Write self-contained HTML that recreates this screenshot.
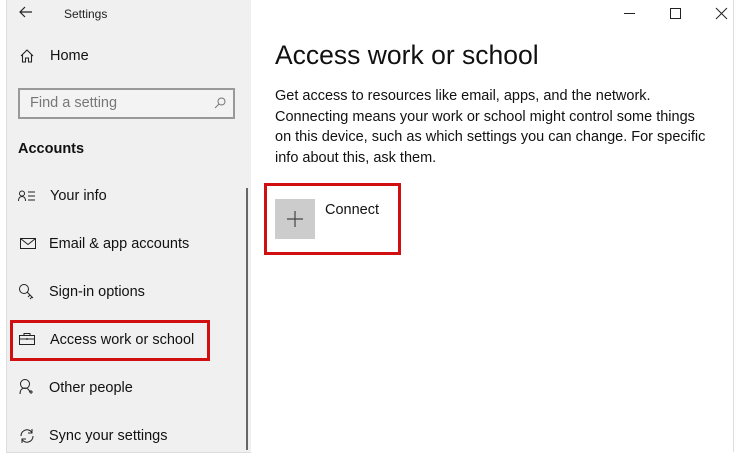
<!DOCTYPE html>
<html><head><meta charset="utf-8"><style>
body{margin:0;width:739px;height:471px;background:#fff;font-family:"Liberation Sans",sans-serif;position:relative;overflow:hidden}
.a{position:absolute}
.side{left:6px;top:0;width:244px;height:452px;background:#f0f0f0;border-bottom:1px solid #ddd;border-left:1px solid #ddd}
.t{font-size:14.5px;color:#111;white-space:nowrap}
svg{position:absolute;overflow:visible}
</style></head><body>
<div class="a side"></div>
<div class="a" style="left:733px;top:0;width:1px;height:452px;background:#ddd"></div>
<div class="a" style="left:246px;top:188px;width:2px;height:262px;background:#666"></div>
<svg style="left:19px;top:6px" width="14" height="12"><path d="M13 6H1M6 1L1 6l5 5" fill="none" stroke="#222" stroke-width="1.2"/></svg>
<div class="a" style="left:64px;top:7px;font-size:12px;color:#222">Settings</div>
<svg style="left:20px;top:49px" width="14" height="14"><path d="M1 7L7 1l6 6M2.5 5.5V13h3V9h3v4h3V5.5" fill="none" stroke="#222" stroke-width="1.1"/></svg>
<div class="a t" style="left:50px;top:48px">Home</div>
<div class="a" style="left:18px;top:88px;width:213px;height:27px;border:2px solid #999;background:#f3f3f3"></div>
<div class="a" style="left:30px;top:95px;font-size:14.5px;color:#777">Find a setting</div>
<svg style="left:214px;top:97px" width="12" height="12"><circle cx="7.5" cy="4.5" r="3.5" fill="none" stroke="#777"/><path d="M5 7L1 11" stroke="#777"/></svg>
<div class="a" style="left:18px;top:141px;font-size:14.5px;font-weight:bold;color:#111">Accounts</div>
<svg style="left:18px;top:190px" width="18" height="12"><circle cx="4" cy="3.5" r="2.5" fill="none" stroke="#222"/><path d="M.5 11c0-3 1.5-4.5 3.5-4.5s3.5 1.5 3.5 4.5M10 2h7M10 6h7M10 10h7" fill="none" stroke="#222"/></svg>
<div class="a t" style="left:50px;top:188px">Your info</div>
<svg style="left:20px;top:238px" width="16" height="12"><rect x=".5" y=".5" width="15" height="10" fill="none" stroke="#222"/><path d="M.5 .5l7.5 6 7.5-6" fill="none" stroke="#222"/></svg>
<div class="a t" style="left:49px;top:236px">Email &amp; app accounts</div>
<svg style="left:19px;top:284px" width="16" height="16"><circle cx="5" cy="5" r="4.5" fill="none" stroke="#222"/><path d="M8 8l6 6M11 11l-2 2M13 13l-2 2" fill="none" stroke="#222"/></svg>
<div class="a t" style="left:49px;top:284px">Sign-in options</div>
<div class="a" style="left:10px;top:320px;width:194px;height:35px;border:3px solid #d01010"></div>
<svg style="left:19px;top:333px" width="16" height="13"><rect x=".5" y="2.5" width="15" height="9" fill="none" stroke="#222"/><path d="M5 2.5V.5h6v2M.5 6h15M8 5v2" fill="none" stroke="#222"/></svg>
<div class="a t" style="left:50px;top:332px">Access work or school</div>
<svg style="left:19px;top:379px" width="16" height="16"><circle cx="6" cy="5" r="4.5" fill="none" stroke="#222"/><path d="M1 15c0-4 2-6 5-6s4 2 5 4M12 11v4M10 13h4" fill="none" stroke="#222"/></svg>
<div class="a t" style="left:49px;top:380px">Other people</div>
<svg style="left:19px;top:428px" width="16" height="16"><path d="M2 8a6 6 0 0 1 11-3.5M14 8a6 6 0 0 1-11 3.5M13 1v4h-4M3 15v-4h4" fill="none" stroke="#222"/></svg>
<div class="a t" style="left:49px;top:428px">Sync your settings</div>
<div class="a" style="left:624px;top:13px;width:11px;height:1px;background:#222"></div>
<div class="a" style="left:670px;top:8px;width:9px;height:9px;border:1px solid #222"></div>
<svg style="left:716px;top:8px" width="11" height="11"><path d="M0 0l11 11M11 0L0 11" stroke="#222"/></svg>
<div class="a" style="left:275px;top:40px;font-size:26.5px;color:#111">Access work or school</div>
<div class="a" style="left:275px;top:86px;font-size:14.5px;color:#111;line-height:20.5px;width:438px">Get access to resources like email, apps, and the network. Connecting means your work or school might control some things on this device, such as which settings you can change. For specific info about this, ask them.</div>
<div class="a" style="left:264px;top:183px;width:131px;height:66px;border:3px solid #d01010"></div>
<div class="a" style="left:275px;top:199px;width:40px;height:40px;background:#cccccc"></div>
<svg style="left:287px;top:211px" width="16" height="16"><path d="M8 0v16M0 8h16" stroke="#444" stroke-width="1.2"/></svg>
<div class="a t" style="left:325px;top:202px">Connect</div>
</body></html>
